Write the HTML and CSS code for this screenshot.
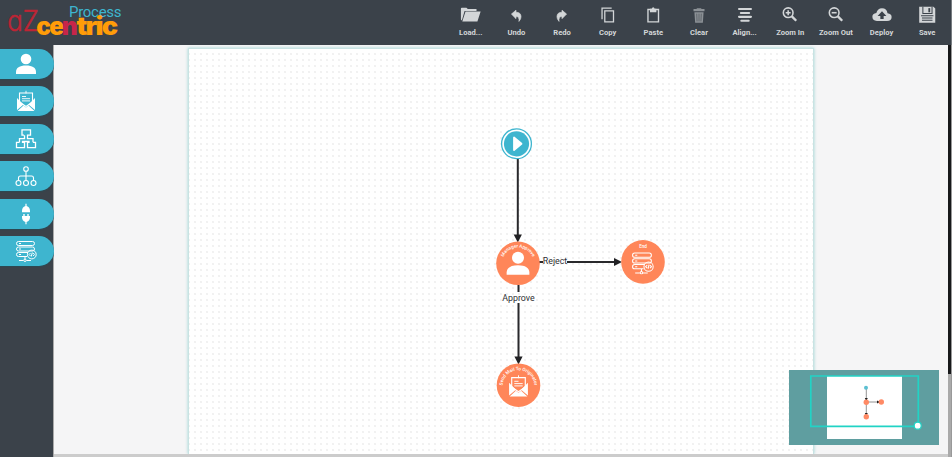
FILE: index.html
```html
<!DOCTYPE html>
<html lang="en">
<head>
<meta charset="utf-8">
<title>Process</title>
<link rel="stylesheet" href="styles.css">
</head>
<body>
<svg class="defs" aria-hidden="true">
  <symbol id="person" viewBox="0 0 22 22"><circle cx="11" cy="6" r="5.3"/><path d="M1 21v-2c0-4 3.500-6.400 10-6.400S21 15 21 19v2z"/></symbol>
  <symbol id="mail" viewBox="0 0 22 22"><path d="M2 8v12l6.500-5.500zM20 8v12l-6.500-5.500zM2.500 21h17L13.500 15.500 11 17.500 8.500 15.500z"/><path d="M4.500 3h13v9L11 16.500 4.500 12z" fill="none" stroke="currentColor" stroke-width="1.100"/><path d="M7 6.500h4M7 8.700h8M7 10.900h8M11 .8v2.700" stroke="currentColor" stroke-width=".9"/></symbol>
  <symbol id="blocks" viewBox="0 0 22 22"><path d="M9 7.200H7V1.800h8.500v5.400h-3v3.500H18v3.600M9.500 7.200v3.500H4.500v3.600M4.500 14.300H1.500v5.400h8v-5.400H7.500v-.8h6.500v.8h-1.500v5.400h8v-5.400H18" fill="none" stroke="currentColor" stroke-width="1.300"/></symbol>
  <symbol id="tree" viewBox="0 0 22 22"><g fill="none" stroke="currentColor" stroke-width="1.100"><circle cx="11" cy="4" r="2.300"/><circle cx="3.500" cy="18" r="2.500"/><circle cx="11" cy="18" r="2.500"/><circle cx="18.500" cy="18" r="2.500"/><path d="M11 6.300v9.200M3.500 15.500V13q0-2 2-2h11q2 0 2 2v2.500"/></g></symbol>
  <symbol id="plug" viewBox="0 0 22 22"><path d="M7 9.300V8Q7 4 10.400 3V.8h1.200V3Q15 4 15 8v1.300zM7 13h1.300v-2h1.400v2h2.600v-2h1.400v2H15v1.300q0 3.500-3.400 4.700v2.200h-1.200V19Q7 17.800 7 14.300z"/></symbol>
  <symbol id="server" viewBox="0 0 22 22"><g fill="none" stroke="currentColor" stroke-width="1"><path d="M3.500 1.500h14q2 0 2 2t-2 2h-14q-2 0-2-2t2-2zM3.500 7h14q2 0 2 2t-2 2h-14q-2 0-2-2t2-2zM12 16.500H3.500q-2 0-2-2t2-2H13M4 3.500h2M4 9h2M4 14.500h2M10 16.500v3M4 20.500h4.500M11.500 20.500H16"/><circle cx="10" cy="20.300" r="1.200"/><circle cx="16.800" cy="14.500" r="4.400"/><path d="M15.500 13L14 14.500l1.500 1.500M18.100 13l1.500 1.500-1.500 1.500M17.300 12.500l-1 4"/></g></symbol>
</svg>
<div class="app">
  <header class="header">
    <svg class="logo" width="130" height="45" viewBox="0 0 130 45">
      <defs><linearGradient id="ngrad"><stop offset="0" stop-color="#d3123f"/><stop offset=".5" stop-color="#9b1b3f"/><stop offset=".54" stop-color="#f07a43"/><stop offset="1" stop-color="#f58a31"/></linearGradient></defs>
      <text class="logo-az" x="7.200" y="30.500" textLength="31.500" lengthAdjust="spacingAndGlyphs">aZ</text>
      <text class="logo-title" x="69" y="16.500" textLength="52.500">Process</text>
      <text class="logo-name" y="35"><tspan x="36.200">ce</tspan><tspan class="logo-n" x="61.800">n</tspan><tspan x="76.500" textLength="40" lengthAdjust="spacingAndGlyphs">tric</tspan></text>
    </svg>
    <nav class="toolbar">
      <button class="tool"><svg class="icon" viewBox="0 0 24 24"><path d="M1 17V5q0-1 1-1h5l1.500 1.500H18V7.500H5L2 18zM6 8.300h16.500L19 19H2.500z"/></svg>Load...</button>
      <button class="tool"><svg class="icon" viewBox="0 0 24 24"><path d="M7 11l5-4.300V9q5.500 0 5.500 5 0 2.500-2.300 5 .8-5.300-3.200-5.300V16z" stroke="currentColor" stroke-width=".7"/></svg>Undo</button>
      <button class="tool"><svg class="icon" viewBox="0 0 24 24"><path d="M17 11l-5-4.300V9q-5.500 0-5.500 5 0 2.500 2.300 5-.8-5.300 3.200-5.300V16z" stroke="currentColor" stroke-width=".7"/></svg>Redo</button>
      <button class="tool"><svg class="icon" viewBox="0 0 24 24"><path d="M5.500 16.500V4.500h10.500M8.500 7.500h9.500v12H8.500z" fill="none" stroke="currentColor" stroke-width="1.400"/></svg>Copy</button>
      <button class="tool"><svg class="icon" viewBox="0 0 24 24"><path d="M6.500 6h11.500v13.500H6.500z" fill="none" stroke="currentColor" stroke-width="1.500"/><path d="M8.700 5.200h2q.2-1.700 1.500-1.700t1.500 1.700h2V9h-7z"/></svg>Paste</button>
      <button class="tool"><svg class="icon dim" viewBox="0 0 24 24"><path d="M6 5.500h3.500v-1h5v1H18V8H6zM7 9h10l-.8 11.500H7.800z"/><path d="M9.500 10.500l.4 8.500M12 10.500V19M14.500 10.500l-.4 8.500" stroke="#3b424a" stroke-width=".6"/></svg>Clear</button>
      <button class="tool"><svg class="icon" viewBox="0 0 24 24"><path d="M5.500 5.500h13M7.500 9.800h9M5.500 14h13M8 18.300h8" stroke="currentColor" stroke-width="2.300" stroke-linecap="round"/></svg>Align...</button>
      <button class="tool"><svg class="icon" viewBox="0 0 24 24"><g fill="none" stroke="currentColor" stroke-width="1.700"><circle cx="10" cy="9.500" r="5.300"/><path d="M7.300 9.500h5.400M10 6.800v5.400"/><path d="M14 13.500l4.800 4.800" stroke-width="2.600"/></g></svg>Zoom In</button>
      <button class="tool"><svg class="icon" viewBox="0 0 24 24"><g fill="none" stroke="currentColor" stroke-width="1.700"><circle cx="10" cy="9.500" r="5.300"/><path d="M7.300 9.500h5.400"/><path d="M14 13.500l4.800 4.800" stroke-width="2.600"/></g></svg>Zoom Out</button>
      <button class="tool"><svg class="icon" viewBox="0 0 24 24"><path fill-rule="evenodd" d="M6.500 18.500q-5-.3-5-4.500 0-3.700 4.300-4.200Q7.200 4.500 12 4.500q5.200 0 6 5.500 4.500.5 4.500 4.200 0 4.300-5 4.300zM12 8L7.200 13h3v3.300h3.600V13h3z"/></svg>Deploy</button>
      <button class="tool"><svg class="icon" viewBox="0 0 24 24"><path d="M3.500 3h15.500l2 2V20.500H3.500z"/><path d="M7.500 3v7.300h10V3M5.500 12.800h13.500M6.500 15.300h11.500M6.500 17.800h11.500" fill="none" stroke="#3b424a" stroke-width="1.100"/><path d="M13.500 4.500h2V9h-2z" fill="#3b424a"/></svg>Save</button>
    </nav>
  </header>
  <div class="workspace">
    <aside class="sidebar">
      <button class="shape"><svg><use href="#person"/></svg></button>
      <button class="shape"><svg><use href="#mail"/></svg></button>
      <button class="shape"><svg><use href="#blocks"/></svg></button>
      <button class="shape"><svg><use href="#tree"/></svg></button>
      <button class="shape"><svg><use href="#plug"/></svg></button>
      <button class="shape"><svg><use href="#server"/></svg></button>
    </aside>
    <main class="canvas">
      <div class="sheet">
        <svg class="diagram" width="624" height="405" viewBox="189 49 624 405">
          <defs>
            <path id="arc1" d="M502 263.500a16 16 0 0 1 32 0"/>
            <path id="arc2" d="M502.600 388a16 16 0 1 1 31.800 0"/>
          </defs>
          <g class="links"><path d="M517.800 159v78M518.500 285v7M518.500 303v56M539 262h4M567 262h49"/></g>
          <path class="heads" d="M513.700 234.500h8.200l-4.100 8zM514.400 356.500h8.200l-4.100 8zM614 258v8l8-4z"/>
          <circle cx="516.500" cy="143.800" r="14.900" fill="#fff" stroke="#3eb5cf" stroke-width="1.300"/>
          <circle cx="516.500" cy="143.800" r="12.600" fill="#3eb5cf"/>
          <path d="M514 137.500v12.600l7.500-6.300z" fill="#fff" stroke="#fff" stroke-width="1.800" stroke-linejoin="round"/>
          <g class="node"><circle cx="518" cy="263.300" r="21.800"/><circle cx="643" cy="261.900" r="21.800"/><circle cx="518.500" cy="385.200" r="21.800"/></g>
          <g class="glyphs">
            <use href="#person" x="505.500" y="251" width="25" height="25"/>
            <use href="#server" x="631" y="251.500" width="23" height="23"/>
            <use href="#mail" x="507" y="374.500" width="23" height="23"/>
          </g>
          <g class="caption">
            <text><textPath href="#arc1" startOffset="50%">Manager Approve</textPath></text>
            <text><textPath href="#arc2" startOffset="50%">Send Mail To Originator</textPath></text>
            <text x="643" y="248">End</text>
          </g>
          <text class="label" x="555" y="263.500" textLength="24.500" lengthAdjust="spacingAndGlyphs">Reject</text>
          <text class="label" x="518.500" y="301" textLength="32.500" lengthAdjust="spacingAndGlyphs">Approve</text>
        </svg>
      </div>
      <div class="overview">
        <svg width="150" height="75" viewBox="789 370 150 75">
          <path d="M827 376h75v63h-75z" fill="#fff"/>
          <path d="M866.300 389v27M866 402h15" stroke="#777" stroke-width=".8"/>
          <path d="M864.800 398h3l-1.500 3zM864.800 413h3l-1.500 3zM877 400.500v3l3-1.500z" fill="#222"/>
          <circle cx="866" cy="387.800" r="2" fill="#5bc0d2"/>
          <g fill="#ff8a65"><circle cx="866.300" cy="402.200" r="2.700"/><circle cx="881.300" cy="402" r="2.700"/><circle cx="866.300" cy="416.800" r="2.700"/></g>
          <path d="M810.800 376h107.500v50.300H810.800z" fill="none" stroke="#22d3c5" stroke-width="1.700"/>
          <circle cx="917.700" cy="425.700" r="3.500" fill="#fff" stroke="#22d3c5" stroke-width="1.200"/>
        </svg>
      </div>
    </main>
    <div class="scroll-y"></div>
  </div>
</div>
</body>
</html>
```
FILE: styles.css
```css
* { box-sizing: border-box; }
body { margin: 0; font-family: Roboto, "Liberation Sans", sans-serif; overflow: hidden; }
.defs { position: absolute; width: 0; height: 0; }
.app { display: flex; flex-direction: column; height: 457px; background: #3b424a; }
.header { display: flex; justify-content: space-between; height: 45px; flex: none; padding-right: 1px; border-right: 1px solid #777c80; }
.logo { flex: none; }
.logo-az { font-family: Inter, sans-serif; font-size: 28px; font-weight: 300; font-feature-settings: "cv11"; fill: #bd2535; stroke: #bd2535; stroke-width: .5px; }
.logo-title { font-size: 15px; fill: #3eb5cf; }
.logo-name { font-family: Inter, "Open Sans", sans-serif; font-size: 24.500px; font-weight: 900; letter-spacing: -1.600px; fill: #ff9c08; }
.logo-n { fill: #c8254a; }
.toolbar { display: flex; }
button { border: 0; padding: 0; margin: 0; background: none; font-family: inherit; }
.tool { width: 45.650px; display: flex; flex-direction: column; align-items: center; gap: 2px; padding-top: 4px; color: #d3d6d8; font-size: 7.600px; font-weight: 700; line-height: 9px; white-space: nowrap; justify-content: flex-start; }
.icon { width: 22px; height: 22px; fill: currentColor; flex: none; }
.icon.dim { color: #8c9196; }
.workspace { display: flex; flex: 1; min-height: 0; }
.sidebar { width: 54px; flex: none; display: flex; flex-direction: column; gap: 7.500px; padding-top: 3.500px; border-right: 1px solid #aaa; }
.shape { width: 53.500px; height: 30px; flex: none; display: flex; align-items: center; justify-content: flex-end; padding-right: 17px; border-radius: 0 15px 15px 0; background: #3eb5cf; color: #fff; box-shadow: 0 1px 1px #2c4a54; }
.shape svg { width: 22px; height: 22px; fill: currentColor; }
.canvas { position: relative; flex: 1; display: flex; justify-content: flex-start; padding: 3px 0 0 134px; background: #f5f5f6; border-bottom: 3px solid #ccc; overflow: hidden; }
.sheet { width: 626px; flex: none; border: 1px solid #c8e3e3; border-bottom: 0; box-shadow: 0 0 3px #9fd4d5; background: #fff radial-gradient(circle, #ededed .6px, transparent 1px) 3px 2px / 6px 6px; }
.diagram { display: block; }
.links { fill: none; stroke: #29292c; stroke-width: 2px; }
.heads { fill: #222225; }
.node { fill: #ff8659; }
.glyphs { fill: #fff; color: #fff; }
.caption { fill: #fff; font-size: 4.600px; font-weight: 500; text-anchor: middle; }
.label { fill: #303033; font-size: 9.600px; text-anchor: middle; }
.overview { position: absolute; left: 735px; top: 325px; width: 150px; height: 75px; background: #5f9ea0; }
.overview svg { display: block; }
.scroll-y { width: 4px; flex: none; background: linear-gradient(#18191b 0 329px, #aaa 329px); border-right: 1px solid #999; }
```
